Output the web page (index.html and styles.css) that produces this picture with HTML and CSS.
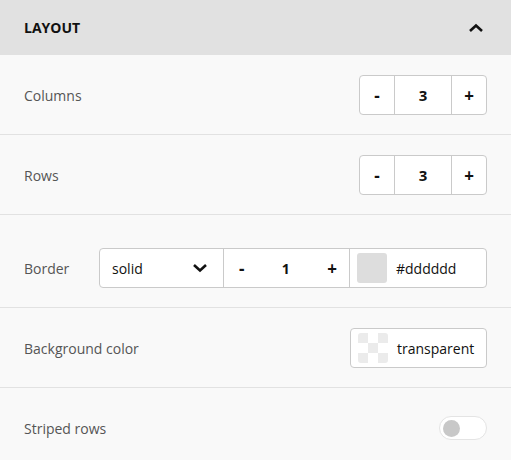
FILE: index.html
```html
<!DOCTYPE html>
<html lang="en">
<head>
    <meta charset="UTF-8">
    <title>Layout</title>
    <link rel="stylesheet" href="styles.css">
</head>
<body>
    <div class="panel">
        <!-- header -->
        <div class="panel-head">
            <span class="panel-title">LAYOUT</span>
            <svg class="chev" width="16" height="10" viewBox="0 0 16 10"><path d="M2 8 L8 2.5 L14 8" fill="none" stroke="#111" stroke-width="2.6"/></svg>
        </div>

        <div class="row">
            <span class="label">Columns</span>
            <div class="box stepper">
                <button class="seg btn">-</button>
                <span class="seg val">3</span>
                <button class="seg btn">+</button>
            </div>
        </div>

        <div class="row">
            <span class="label">Rows</span>
            <div class="box stepper">
                <button class="seg btn">-</button>
                <span class="seg val">3</span>
                <button class="seg btn">+</button>
            </div>
        </div>

        <div class="row row-border">
            <span class="label">Border</span>
            <div class="box border-box">
                <div class="seg select">
                    <span>solid</span>
                    <svg width="16" height="10" viewBox="0 0 16 10"><path d="M2 2 L8 7.5 L14 2" fill="none" stroke="#111" stroke-width="2.6"/></svg>
                </div>
                <div class="seg width">
                    <span class="sym">-</span>
                    <span class="num">1</span>
                    <span class="sym">+</span>
                </div>
                <div class="seg color">
                    <span class="swatch grey"></span>
                    <span>#dddddd</span>
                </div>
            </div>
        </div>

        <div class="row">
            <span class="label">Background color</span>
            <div class="box color-box">
                <span class="swatch checker"></span>
                <span>transparent</span>
            </div>
        </div>

        <div class="row">
            <span class="label">Striped rows</span>
            <div class="toggle"><span class="knob"></span></div>
        </div>
    </div>
</body>
</html>
```

FILE: styles.css
```css
body{
    margin: 0;
    background: #f9f9f9;
    font-family: "Open Sans", "Noto Sans", sans-serif;
    font-size: 14px;
    color: #111;
}
.panel{
    width: 511px;
}
/* header */
.panel-head{
    height: 55px;
    box-sizing: border-box;
    padding: 0 27px 0 24px;
    background: #e1e1e1;
    display: flex;
    align-items: center;
    justify-content: space-between;
}
.panel-title{
    font-weight: 700;
    font-size: 14px;
}
/* rows */
.row{
    display: flex;
    align-items: center;
    justify-content: space-between;
    padding: 20px 24px 19px;
    border-bottom: 1px solid #e2e2e2;
    height: 40px;
}
.row-border{
    padding-top: 33px;
}
.row:last-child{
    border-bottom: 0;
}
.label{
    color: #555;
    font-size: 14px;
}
.box{
    display: flex;
    height: 40px;
    box-sizing: border-box;
    border: 1px solid #cacaca;
    border-radius: 4px;
    background: #fff;
}
.seg{
    display: flex;
    align-items: center;
    justify-content: center;
    border-left: 1px solid #cacaca;
}
.seg:first-child{
    border-left: 0;
}
.btn{
    width: 35px;
    padding: 0;
    background: transparent;
    border-top: 0;
    border-right: 0;
    border-bottom: 0;
    font-family: inherit;
    font-size: 17px;
    font-weight: 700;
    color: #111;
}
.btn:first-child{
    width: 34px;
}
.val{
    width: 56px;
    font-weight: 700;
    font-size: 15px;
}
/* border row */
.border-box{
    width: 388px;
}
.select{
    width: 123px;
    box-sizing: border-box;
    padding: 0 15px 0 12px;
    justify-content: space-between;
}
.width{
    width: 126px;
    box-sizing: border-box;
    padding: 0 12px 0 15px;
    justify-content: space-between;
}
.sym{
    font-size: 17px;
    font-weight: 700;
}
.num{
    font-weight: 700;
}
.color{
    flex: 1;
    justify-content: flex-start;
    padding-left: 7px;
}
.swatch{
    width: 30px;
    height: 30px;
    border-radius: 3px;
    margin-right: 9px;
    flex: none;
}
.grey{
    background: #dddddd;
}
.checker{
    background-color: #fff;
    background-image: conic-gradient(#fff 25%, #ebebeb 0 50%, #fff 0 75%, #ebebeb 0);
    background-size: 20px 20px;
}
.color-box{
    width: 137px;
    align-items: center;
    padding-left: 7px;
}
/* toggle */
.toggle{
    width: 48px;
    height: 24px;
    box-sizing: border-box;
    border: 1px solid #e4e4e4;
    border-radius: 12px;
    background: #fff;
    display: flex;
    align-items: center;
    padding-left: 3px;
}
.knob{
    width: 17px;
    height: 17px;
    border-radius: 50%;
    background: #c8c8c8;
}
```
